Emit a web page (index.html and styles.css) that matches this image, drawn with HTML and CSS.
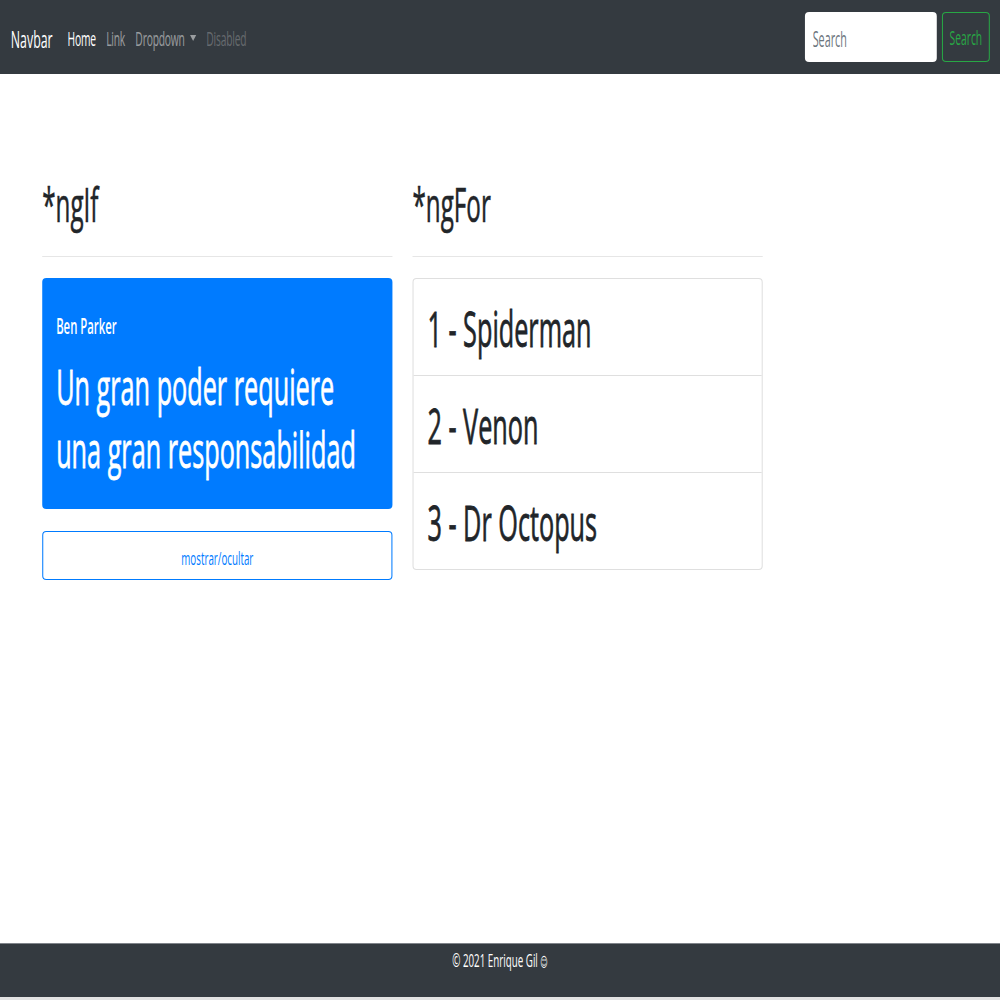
FILE: index.html
```html
<!DOCTYPE html>
<html lang="es">
<head>
<meta charset="utf-8">
<title>Angular Directivas</title>
<link rel="stylesheet" href="styles.css">
</head>
<body>
<div class="page">
  <nav class="navbar">
    <a class="brand" href="#">Navbar</a>
    <ul class="nav">
      <li class="nav-link active">Home</li>
      <li class="nav-link">Link</li>
      <li class="nav-link">Dropdown<span class="caret"></span></li>
      <li class="nav-link disabled">Disabled</li>
    </ul>
    <form class="search">
      <input class="search-input" type="search" placeholder="Search">
      <button class="search-btn" type="button">Search</button>
    </form>
  </nav>

  <main class="content">
    <section class="col">
      <h1 class="col-title">*ngIf</h1>
      <hr class="divider">
      <div class="quote-card">
        <div class="quote-author">Ben Parker</div>
        <p class="quote-text">Un gran poder requiere<br>una gran responsabilidad</p>
      </div>
      <button class="toggle-btn" type="button">mostrar/ocultar</button>
    </section>
    <section class="col">
      <h1 class="col-title">*ngFor</h1>
      <hr class="divider">
      <ul class="hero-list">
        <li class="hero-item">1 - Spiderman</li>
        <li class="hero-item">2 - Venon</li>
        <li class="hero-item">3 - Dr Octopus</li>
      </ul>
    </section>
  </main>

  <footer class="footer">© 2021 Enrique Gil <span class="smiley">☺</span></footer>
</div>
</body>
</html>
```

FILE: styles.css
```css
html, body {
  margin: 0;
  padding: 0;
  height: 100%;
  overflow: hidden;
  background: #e2e2e2;
}

/* the whole page is drawn horizontally squeezed, as in the reference */
.page {
  width: 1942px;
  height: 997px;
  transform: scaleX(0.515);
  transform-origin: 0 0;
  display: flex;
  flex-direction: column;
  background: #fff;
  font-family: "Open Sans", "Noto Sans", sans-serif;
  color: #212529;
}

/* navbar */
.navbar {
  height: 74px;
  flex: none;
  box-sizing: border-box;
  display: flex;
  align-items: center;
  padding: 0 20px 0 21px;
  background: #343a40;
}

.brand {
  font-size: 24px;
  line-height: 30px;
  padding-top: 3px;
  margin-right: 19px;
  color: #fff;
  text-decoration: none;
}

.nav {
  display: flex;
  align-items: center;
  list-style: none;
  margin: 0;
  padding: 0;
}

.nav-link {
  font-size: 20px;
  letter-spacing: -0.4px;
  line-height: 30px;
  padding: 4px 10px 0;
  color: rgba(255, 255, 255, 0.5);
  display: flex;
  align-items: center;
}

.nav-link.active {
  color: #fff;
}

.nav-link.disabled {
  color: rgba(255, 255, 255, 0.25);
}

.caret {
  display: inline-block;
  margin-left: 10px;
  margin-top: -2px;
  border-top: 6px solid currentColor;
  border-left: 6px solid transparent;
  border-right: 6px solid transparent;
}

.search {
  margin: 0 0 0 auto;
  display: flex;
  gap: 10px;
}

.search-input {
  width: 256px;
  height: 50px;
  box-sizing: border-box;
  border: none;
  border-radius: 8px / 4px;
  padding: 4px 15px 0;
  font-family: inherit;
  font-size: 21px;
  color: #495057;
  background: #fff;
  outline: none;
}

.search-input::placeholder {
  color: #6c757d;
}

.search-btn {
  width: 93px;
  height: 50px;
  box-sizing: border-box;
  padding: 0;
  border-style: solid;
  border-width: 1px 2px;
  border-color: #28a745;
  border-radius: 8px / 4px;
  background: transparent;
  color: #28a745;
  font-family: inherit;
  font-size: 20px;
}

/* content */
.content {
  flex: 1;
  display: flex;
  gap: 39px;
  padding: 103px 0 0 82px;
}

.col {
  width: 680px;
}

.col-title {
  margin: 0;
  font-size: 47px;
  font-weight: 400;
  line-height: 54px;
  -webkit-text-stroke: 0.6px currentColor;
}

.divider {
  margin: 25px 0 21px;
  border: 0;
  border-top: 1px solid #e6e6e6;
}

.quote-card {
  background: #007bff;
  color: #fff;
  border-radius: 8px / 4px;
  padding: 34.5px 27px 28.5px;
}

.quote-author {
  font-size: 22px;
  font-weight: 600;
  line-height: 25px;
}

.quote-text {
  margin: 17px 0 0;
  font-size: 49px;
  line-height: 63px;
  font-weight: 400;
  white-space: nowrap;
  -webkit-text-stroke: 0.8px currentColor;
}

.toggle-btn {
  display: block;
  width: 100%;
  height: 49px;
  margin-top: 22px;
  box-sizing: border-box;
  padding: 4px 0 0;
  border-style: solid;
  border-width: 1px 2px;
  border-color: #007bff;
  border-radius: 8px / 4px;
  background: #fff;
  color: #007bff;
  font-family: inherit;
  font-size: 19px;
}

.hero-list {
  list-style: none;
  margin: 0;
  padding: 0;
  border-style: solid;
  border-width: 1px 2px;
  border-color: #dfdfdf;
  border-radius: 8px / 4px;
}

.hero-item {
  padding: 18px 27px 15px;
  font-size: 49px;
  font-weight: 400;
  line-height: 63px;
  border-bottom: 1px solid #dfdfdf;
  -webkit-text-stroke: 0.8px currentColor;
}

.hero-item:last-child {
  border-bottom: none;
}

/* footer */
.footer {
  flex: none;
  height: 54px;
  box-sizing: border-box;
  border-top: 1px solid #80848a;
  padding-top: 2px;
  background: #343a40;
  color: #fff;
  text-align: center;
  font-size: 19px;
  line-height: 28px;
}

.smiley {
  font-family: "DejaVu Sans", sans-serif;
  font-size: 14px;
}
```
